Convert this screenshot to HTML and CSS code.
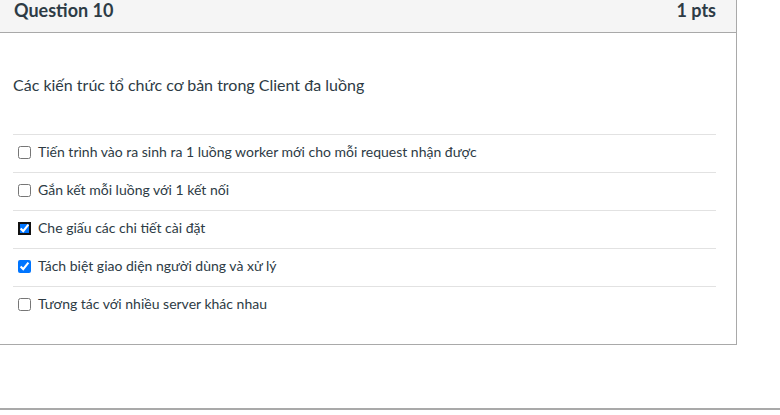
FILE: index.html
```html
<!DOCTYPE html>
<html lang="vi">
<head>
<meta charset="utf-8">
<link rel="stylesheet" href="styles.css">
</head>
<body>
<div class="question">
  <div class="q-header">
    <span class="q-name">Question 10</span>
    <span class="q-pts">1 pts</span>
  </div>
  <div class="q-body">
    <div class="q-text">Các kiến trúc tổ chức cơ bản trong Client đa luồng</div>
    <div class="answers">
      <label class="answer"><input type="checkbox"><span>Tiến trình vào ra sinh ra 1 luồng worker mới cho mỗi request nhận được</span></label>
      <label class="answer"><input type="checkbox"><span>Gắn kết mỗi luồng với 1 kết nối</span></label>
      <label class="answer"><input type="checkbox" class="focused" checked><span>Che giấu các chi tiết cài đặt</span></label>
      <label class="answer"><input type="checkbox" checked><span>Tách biệt giao diện người dùng và xử lý</span></label>
      <label class="answer"><input type="checkbox"><span>Tương tác với nhiều server khác nhau</span></label>
    </div>
  </div>
</div>
<div class="footer-rule"></div>
</body>
</html>
```
FILE: styles.css
```css
html, body {
  margin: 0;
  padding: 0;
  background: #ffffff;
}
body {
  font-family: Lato, "Noto Sans", sans-serif;
  color: #2d3b45;
  width: 780px;
  height: 415px;
  overflow: hidden;
}
.question {
  width: 738px;
  margin-left: -1px;
  border: 1px solid #a9a9a9;
  border-top: none;
  box-sizing: border-box;
  height: 345px;
}
.q-header {
  height: 32px;
  background: #f5f5f5;
  border-bottom: 1px solid #a9a9a9;
  display: flex;
  justify-content: space-between;
  align-items: flex-start;
  padding: 0 20px 0 14px;
  box-sizing: content-box;
}
.q-name, .q-pts {
  font-weight: 700;
  font-size: 18px;
  line-height: 20px;
  margin-top: 0;
}
.q-body {
  padding: 0 20px 0 13px;
}
.q-text {
  font-size: 16px;
  line-height: 20px;
  padding-top: 42px;
  height: 59px;
}
.answers {
  display: flex;
  flex-direction: column;
}
.answer {
  display: flex;
  align-items: center;
  height: 37px;
  padding-bottom: 0;
  border-top: 1px solid #e2e2e2;
  font-size: 14px;
  padding-left: 5px;
  box-sizing: content-box;
}
.answer input {
  margin: 0 7px 2px 0;
  width: 13px;
  height: 13px;
}
.answer input.focused {
  outline: 2px solid #111111;
  outline-offset: -2px;
  border-radius: 2px;
}
.answer span {
  line-height: 18px;
  margin-bottom: 3px;
}
.footer-rule {
  margin-top: 63px;
  height: 0;
  border-top: 2px solid #a9a9a9;
}
```
